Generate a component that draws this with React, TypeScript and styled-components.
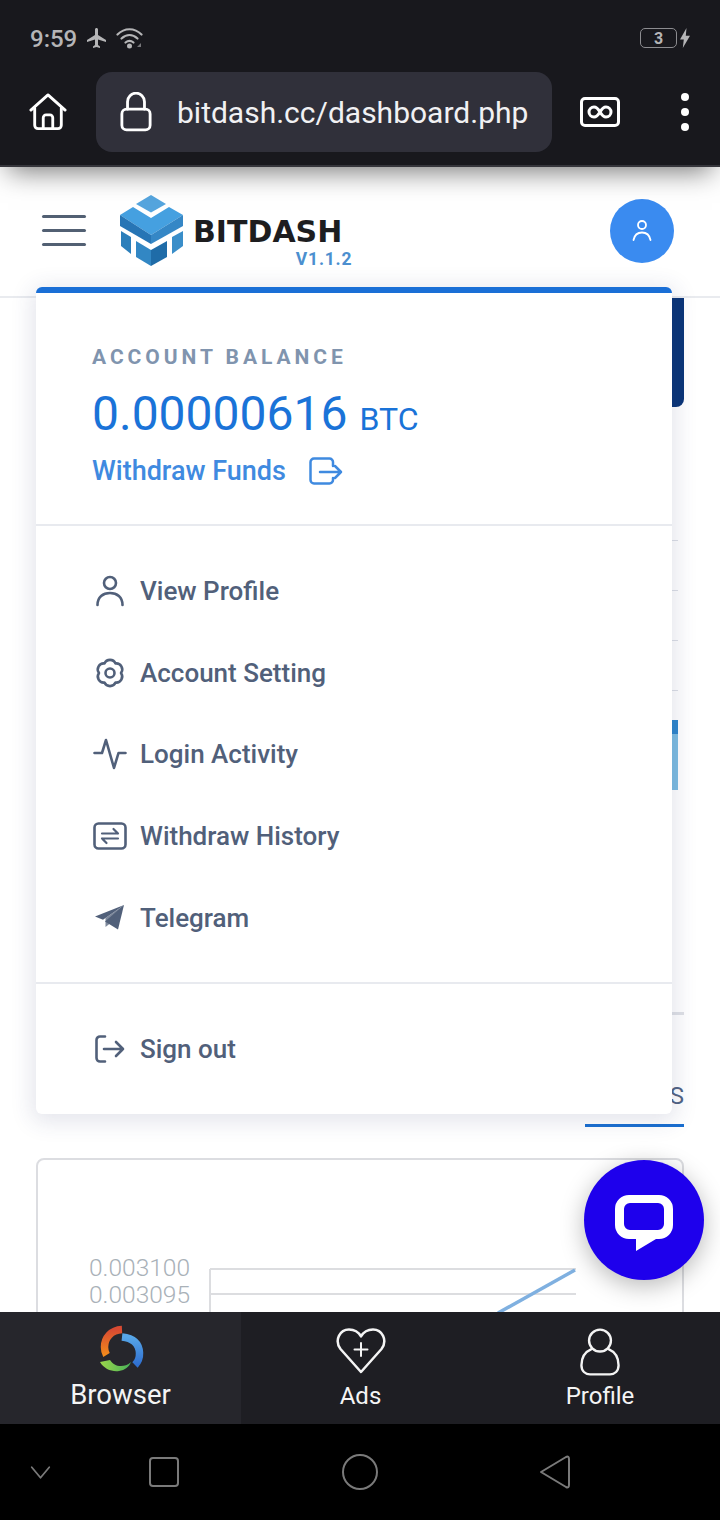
import React from 'react';
import styled, { createGlobalStyle } from 'styled-components';

const GlobalStyle = createGlobalStyle`
  html, body {
    margin: 0;
    padding: 0;
    background: #000;
  }
  * {
    box-sizing: border-box;
  }
`;

const Phone = styled.div`
  width: 720px;
  height: 1520px;
  display: flex;
  flex-direction: column;
  overflow: hidden;
  font-family: Roboto, 'Liberation Sans', sans-serif;
  background: #fff;
`;

const BrowserChrome = styled.header`
  position: relative;
  z-index: 3;
  flex: none;
  height: 167px;
  background: #18181d;
  border-bottom: 2px solid #35353b;
  box-shadow: 0 12px 26px -8px rgba(0, 0, 0, 0.55);
`;
const StatusBar = styled.div`
  height: 72px;
  padding: 26px 30px 0 30px;
  display: flex;
  align-items: flex-start;
  color: #b5b5b7;
`;
const Clock = styled.span`
  font-size: 24px;
  font-weight: 500;
  line-height: 26px;
  margin-right: 8px;
`;
const StatusSpacer = styled.div`
  flex: 1;
`;
const Battery = styled.div`
  width: 37px;
  height: 20px;
  margin-top: 2px;
  border: 1.5px solid #8c8c90;
  border-radius: 5px;
  display: flex;
  align-items: center;
  justify-content: center;
  font-size: 16px;
  font-weight: 700;
  color: #b5b5b7;
`;
const Toolbar = styled.div`
  display: flex;
  align-items: center;
  height: 80px;
  padding-left: 29px;
`;
const AddressBar = styled.div`
  width: 456px;
  height: 80px;
  margin-left: 29px;
  padding-left: 24px;
  display: flex;
  align-items: center;
  gap: 25px;
  background: #30303a;
  border-radius: 16px;
`;
const Url = styled.span`
  font-size: 30px;
  color: #f1f1f3;
  white-space: nowrap;
`;
const TabCounter = styled.div`
  width: 40px;
  height: 30px;
  margin-left: 28px;
  border: 3px solid #fff;
  border-radius: 5px;
  display: flex;
  align-items: center;
  justify-content: center;
`;
const MenuDots = styled.div`
  margin-left: 61px;
  display: flex;
  flex-direction: column;
  gap: 7px;
`;
const Dot = styled.span`
  width: 8px;
  height: 8px;
  border-radius: 50%;
  background: #fff;
`;

const WebArea = styled.main`
  position: relative;
  flex: none;
  height: 1145px;
  overflow: hidden;
  background: #fff;
`;
const SiteHeader = styled.div`
  height: 131px;
  padding: 0 46px 2px 42px;
  display: flex;
  align-items: center;
  background: #fff;
  border-bottom: 2px solid #e9ebef;
`;
const Hamburger = styled.div`
  width: 44px;
  display: flex;
  flex-direction: column;
  gap: 11px;
  margin-right: 33px;
`;
const HamburgerLine = styled.span`
  height: 3px;
  border-radius: 2px;
  background: #526073;
`;
const Brand = styled.div`
  display: flex;
  align-items: flex-start;
  gap: 6px;
`;
const BrandText = styled.div`
  display: flex;
  flex-direction: column;
  align-items: flex-end;
  padding-top: 23px;
`;
const BrandName = styled.span`
  font-family: 'DejaVu Sans', Inter, sans-serif;
  font-size: 30px;
  font-weight: 700;
  line-height: 30px;
  color: #1d1d1f;
`;
const BrandVersion = styled.span`
  font-size: 17.5px;
  font-weight: 700;
  line-height: 18px;
  letter-spacing: 0.8px;
  color: #4b8fcf;
  margin-right: -10px;
  margin-top: 3px;
`;
const Avatar = styled.div`
  width: 64px;
  height: 64px;
  margin-left: auto;
  border-radius: 50%;
  background: #3a8bf0;
  display: flex;
  align-items: center;
  justify-content: center;
`;

const PageBehind = styled.div`
  padding: 0 36px;
`;
const HeroCard = styled.div`
  height: 109px;
  background: #0a3578;
  border-radius: 0 0 8px 8px;
`;
const PeekRows = styled.div`
  margin-top: 84px;
  padding-right: 6px;
`;
const PeekRow = styled.div`
  height: 50px;
  border-bottom: 1px solid #dcdfe6;
`;
const PeekBar = styled.div`
  height: 70px;
  margin: 29px 6px 0 0;
  background: linear-gradient(#2f86cc 0 14px, #7dbde2 14px);
`;
const PeekRule = styled.div`
  height: 3px;
  margin-top: 222px;
  background: #dfe1e6;
`;
const TabsRow = styled.div`
  margin-top: 64px;
  display: flex;
  justify-content: flex-end;
`;
const TabLabel = styled.div`
  width: 99px;
  height: 48px;
  text-align: right;
  font-size: 24px;
  line-height: 34px;
  color: #526484;
  border-bottom: 3px solid #1a6fd0;
`;
const ChartCard = styled.div`
  margin-top: 31px;
  height: 300px;
  border: 2px solid #dcdde1;
  border-radius: 8px;
  overflow: hidden;
`;

const Dropdown = styled.section`
  position: absolute;
  z-index: 1;
  left: 36px;
  top: 120px;
  width: 636px;
  background: #fff;
  border-top: 6px solid #1a6fd6;
  border-radius: 6px;
  box-shadow: 0 4px 22px 4px rgba(43, 55, 110, 0.13);
`;
const BalancePanel = styled.div`
  height: 233px;
  padding: 53px 56px 0;
  border-bottom: 2px solid #e8eaef;
`;
const BalanceLabel = styled.div`
  font-size: 21px;
  font-weight: 700;
  line-height: 22px;
  letter-spacing: 3.95px;
  color: #8094ae;
`;
const BalanceAmount = styled.div`
  display: flex;
  align-items: baseline;
  gap: 12px;
  margin-top: 18px;
  color: #1a73d8;
  font-size: 48px;
  line-height: 56px;
`;
const BalanceUnit = styled.span`
  font-size: 32px;
`;
const WithdrawLink = styled.a`
  display: flex;
  align-items: center;
  gap: 23px;
  margin-top: 7px;
  font-size: 27px;
  font-weight: 500;
  line-height: 34px;
  color: #3f8ae0;
`;
const MenuSection = styled.ul<{ $divided?: boolean }>`
  list-style: none;
  margin: 0;
  padding: 24px 0 24px 56px;
  border-bottom: ${(p) => (p.$divided ? '2px solid #e8eaef' : 'none')};
`;
const MenuItem = styled.li`
  display: flex;
  align-items: center;
  height: 81.7px;
  gap: 12px;
  font-size: 26px;
  font-weight: 500;
  color: #51607a;
`;
const IconSlot = styled.span`
  width: 36px;
  flex: none;
  display: flex;
  justify-content: center;
`;

const ChatButton = styled.button`
  position: absolute;
  z-index: 2;
  right: 16px;
  bottom: 32px;
  width: 120px;
  height: 120px;
  border: 0;
  padding: 6px 0 0;
  border-radius: 50%;
  background: #1e00ec;
  box-shadow: 0 6px 24px rgba(0, 0, 0, 0.28);
  display: flex;
  align-items: center;
  justify-content: center;
`;

const TabBar = styled.nav`
  flex: none;
  height: 112px;
  display: grid;
  grid-template-columns: 241px 1fr 240px;
  background: #1e1e23;
`;
const TabBarItem = styled.div<{ $active?: boolean }>`
  display: flex;
  flex-direction: column;
  align-items: center;
  padding-top: ${(p) => (p.$active ? '13px' : '16px')};
  gap: ${(p) => (p.$active ? '3px' : '1px')};
  background: ${(p) => (p.$active ? '#26262c' : 'transparent')};
  color: #f4f4f4;
  font-size: ${(p) => (p.$active ? '27.5px' : '24px')};
  line-height: 34px;
`;
const TabIcon = styled.div`
  height: 50px;
`;
const SystemNav = styled.div`
  flex: none;
  height: 96px;
  background: #000;
  display: flex;
  align-items: center;
`;
const SystemSlot = styled.div<{ $width: number }>`
  display: flex;
  justify-content: center;
  width: ${(p) => p.$width}px;
`;

const Stroke = { fill: 'none', strokeLinecap: 'round', strokeLinejoin: 'round' } as const;

const HomeIcon = () => (
  <svg width="38" height="38" viewBox="0 0 40 40" {...Stroke} stroke="#fff" strokeWidth="3">
    <path d="M2 18 20 2l18 16" />
    <path d="M6 16v18a3.500 3.500 0 0 0 3.500 3.500h21A3.500 3.500 0 0 0 34 34V16" />
    <path d="M15 37V26a3 3 0 0 1 3-3h4a3 3 0 0 1 3 3v11" />
  </svg>
);
const LockIcon = () => (
  <svg width="32" height="40" viewBox="0 0 34 42" {...Stroke} stroke="#fff" strokeWidth="3">
    <rect x="2" y="18" width="30" height="22" rx="5" />
    <path d="M8 18V10a9 9 0 0 1 18 0v8" />
  </svg>
);
const InfinityIcon = () => (
  <svg width="26" height="14" viewBox="0 0 26 14" {...Stroke} stroke="#fff" strokeWidth="3">
    <path d="M13 7C11 3.500 9.500 2 7 2a5 5 0 0 0 0 10c2.500 0 4-1.500 6-5s3.500-5 6-5a5 5 0 0 1 0 10c-2.500 0-4-1.500-6-5z" />
  </svg>
);
const PlaneIcon = () => (
  <svg width="24" height="24" viewBox="0 0 24 24" fill="#b5b5b7">
    <path d="M21 16v-2l-8-5V3.500c0-.83-.67-1.500-1.500-1.500S10 2.670 10 3.500V9l-8 5v2l8-2.500V19l-2 1.500V22l3.500-1 3.500 1v-1.500L13 19v-5.500l8 2.500z" />
  </svg>
);
const WifiIcon = () => (
  <svg width="28" height="22" viewBox="0 0 28 22" {...Stroke} stroke="#b5b5b7" strokeWidth="2.200" style={{ margin: '1px 0 0 7px' }}>
    <path d="M1.500 7.500C8.500 .5 18.500 .5 25.500 7.500" />
    <path d="M5.500 11.500c5-4.500 11-4.500 16 0" />
    <path d="M9.500 15.500c2.800-2.400 5.200-2.400 8 0" />
    <circle cx="13.500" cy="19" r="1.400" fill="#b5b5b7" />
    <path d="M21 20l4-4v4z" fill="#77777b" stroke="none" />
  </svg>
);
const BoltIcon = () => (
  <svg width="10" height="20" viewBox="0 0 10 20" fill="#b5b5b7" style={{ marginTop: 2, marginLeft: 3 }}>
    <path d="M6.500 0 0 11.500h3.800L2.800 20 10 7.800H5.800z" />
  </svg>
);

const LogoMark = () => (
  <svg width="68" height="74" viewBox="18 11 68 74">
    <polygon points="50,12 65,21 50,29.500 35,21" fill="#55a5de" />
    <polygon points="19,32 32,24 50,35 68,24 82,32 50,52" fill="#45a0e0" />
    <polygon points="19,32 50,52 50,61 19,43" fill="#2775b5" />
    <polygon points="82,32 50,52 50,61 82,43" fill="#3587c6" />
    <polygon points="20,48 30,54 30,71 20,63" fill="#2c7fbb" />
    <polygon points="35,58 50,67 50,83 35,74" fill="#3287c4" />
    <polygon points="50,67 66,58 66,74 50,83" fill="#1f6ca8" />
    <polygon points="71,54 82,48 82,63 71,71" fill="#3a8ec9" />
  </svg>
);
const AvatarIcon = () => (
  <svg width="20" height="24" viewBox="0 0 20 24" {...Stroke} stroke="#fff" strokeWidth="1.800">
    <circle cx="10" cy="6" r="4" />
    <path d="M1.500 21c1-5 4.500-7.500 8.500-7.500s7.500 2.500 8.500 7.500" />
  </svg>
);
const ExitBoxIcon = () => (
  <svg width="34" height="28" viewBox="0 0 34 28" {...Stroke} stroke="#3f8ae0" strokeWidth="2.500">
    <path d="M24 9V5a3.500 3.500 0 0 0-3.500-3.500H5A3.500 3.500 0 0 0 1.500 5v18A3.500 3.500 0 0 0 5 26.500h15.500A3.500 3.500 0 0 0 24 23v-2" />
    <path d="M11 15h21M26 9l6 6-6 6" />
  </svg>
);

const menuIcon = { ...Stroke, stroke: '#51607a', strokeWidth: 2.600 };

const UserIcon = () => (
  <svg width="28" height="32" viewBox="0 0 28 32" {...menuIcon}>
    <circle cx="14" cy="8" r="6" />
    <path d="M1.500 30c0-8 5.500-12 12.500-12s12.500 4 12.500 12" />
  </svg>
);

// six rounded lobes round a hub, valleys every 60deg
const gearPath = (() => {
  const pts = [0, 1, 2, 3, 4, 5].map((i) => {
    const a = (i * Math.PI) / 3;
    return [16 + 11 * Math.cos(a), 16 + 11 * Math.sin(a)];
  });
  const arcs = pts.slice(1).concat([pts[0]]);
  return (
    `M${pts[0][0]} ${pts[0][1]}` +
    arcs.map(([x, y]) => `A6 6 0 0 1 ${x} ${y}`).join('') +
    'Z'
  );
})();
const GearIcon = () => (
  <svg width="32" height="32" viewBox="0 0 32 32" {...menuIcon}>
    <path d={gearPath} />
    <circle cx="16" cy="16" r="4.500" />
  </svg>
);
const ActivityIcon = () => (
  <svg width="34" height="32" viewBox="0 0 34 32" {...menuIcon}>
    <path d="M1.500 15h7.500L13 2l8 28 4.500-15h7" />
  </svg>
);
const TransferIcon = () => (
  <svg width="34" height="28" viewBox="0 0 34 28" {...menuIcon}>
    <rect x="1.500" y="1.500" width="31" height="25" rx="4" />
    <path d="M9 16.500h16M9 16.500l4.500 4.500M25 11.500H9M25 11.500l-4.500-4.500" strokeWidth="2.200" />
  </svg>
);
const PlaneSendIcon = () => (
  <svg width="30" height="26" viewBox="0 0 30 26" fill="#51607a">
    <path d="M29 0 0 11.500l8 3.200z" />
    <path d="M29 0 10 16.500 23 24.500z" />
    <path d="M29 0 10.500 13l0 9 4.500-3.500z" opacity="0.75" />
  </svg>
);
const SignOutIcon = () => (
  <svg width="30" height="28" viewBox="0 0 30 28" {...menuIcon}>
    <path d="M10 1.500H5A3.500 3.500 0 0 0 1.500 5v18A3.500 3.500 0 0 0 5 26.500h5" />
    <path d="M9 14h19M21 7l7 7-7 7" />
  </svg>
);

const ChatIcon = () => (
  <svg width="58" height="56" viewBox="0 0 58 56">
    <path
      fillRule="evenodd"
      fill="#fff"
      d="M14 0h30a14 14 0 0 1 14 14v16a14 14 0 0 1-14 14h-3L21 56V44h-7A14 14 0 0 1 0 30V14A14 14 0 0 1 14 0zM15 8a6 6 0 0 0-6 6v15a6 6 0 0 0 6 6h28a6 6 0 0 0 6-6V14a6 6 0 0 0-6-6z"
    />
  </svg>
);

const ChartPlot = () => (
  <svg width="642" height="152" viewBox="0 0 642 152">
    <g stroke="#dcdde0" strokeWidth="2" fill="none">
      <path d="M172 109h366M172 134h366M172 109v43" />
    </g>
    <path d="M537 110 460 153" stroke="#7fb0e0" strokeWidth="3.500" fill="none" />
    <g fill="#a9b1b8" fontFamily="Roboto, sans-serif" fontWeight="300" fontSize="24.500" textAnchor="end">
      <text x="152" y="116">0.003100</text>
      <text x="152" y="143">0.003095</text>
    </g>
  </svg>
);

const SwirlIcon = () => (
  <svg width="50" height="50" viewBox="0 0 50 50" fill="none" strokeWidth="7.500">
    <defs>
      <linearGradient id="swirlRed" x1="0" y1="0" x2="0" y2="1">
        <stop offset="0" stopColor="#d84a32" />
        <stop offset="1" stopColor="#f28a1c" />
      </linearGradient>
      <linearGradient id="swirlBlue" x1="0" y1="0" x2="0" y2="1">
        <stop offset="0" stopColor="#57a6e8" />
        <stop offset="1" stopColor="#2f6fd0" />
      </linearGradient>
      <linearGradient id="swirlGreen" x1="0" y1="0" x2="1" y2="0">
        <stop offset="0" stopColor="#9cd64a" />
        <stop offset="1" stopColor="#47b25a" />
      </linearGradient>
    </defs>
    <path d="M26 4.500C15 5 8.500 13 8.500 22c0 3 .5 5.500 2 8" stroke="url(#swirlRed)" />
    <path d="M26 12c9 1 17 5 17.500 16 .2 5-2 9.500-4.500 12" stroke="url(#swirlBlue)" />
    <path d="M4 37c4 7 12 10 19 9 6-1 10-4 12-9-3 3-7 4-10 4-5 0-8-2-11-6z" fill="url(#swirlGreen)" strokeWidth="0" />
  </svg>
);
const HeartPlusIcon = () => (
  <svg width="50" height="46" viewBox="0 0 50 46" {...Stroke} stroke="#f4f4f4" strokeWidth="2.500">
    <path d="M25 44 4.500 21C-2 12 4 1.500 13 1.500c5 0 9.500 2.500 12 7 2.500-4.500 7-7 12-7 9 0 15 10.500 8.500 19.500z" />
    <path d="M25 15v13M18.500 21.500h13" strokeWidth="2" />
  </svg>
);
const PersonIcon = () => (
  <svg width="40" height="48" viewBox="0 0 42 50" {...Stroke} stroke="#f4f4f4" strokeWidth="2.500">
    <ellipse cx="21" cy="13" rx="11.500" ry="11.500" />
    <path d="M12 22C5 25 1.500 31 1.500 39c0 6 4 9.500 9 9.500h21c5 0 9-3.500 9-9.500 0-8-3.500-14-10.500-17" />
  </svg>
);

const navStroke = { ...Stroke, stroke: '#7a7a7a', strokeWidth: 2 };

const NavChevron = () => (
  <svg width="21" height="15" viewBox="0 0 24 16" {...navStroke}>
    <path d="M2 2l10 12L22 2" />
  </svg>
);
const NavSquare = () => (
  <svg width="30" height="30" viewBox="0 0 30 30" {...navStroke}>
    <rect x="1" y="1" width="28" height="28" rx="3" />
  </svg>
);
const NavCircle = () => (
  <svg width="36" height="36" viewBox="0 0 36 36" {...navStroke}>
    <circle cx="18" cy="18" r="17" />
  </svg>
);
const NavBack = () => (
  <svg width="32" height="34" viewBox="0 0 32 34" {...navStroke}>
    <path d="M2 17 27 2c2-1 3 0 3 2v26c0 2-1 3-3 2z" />
  </svg>
);

const menuItems = [
  { label: 'View Profile', icon: <UserIcon /> },
  { label: 'Account Setting', icon: <GearIcon /> },
  { label: 'Login Activity', icon: <ActivityIcon /> },
  { label: 'Withdraw History', icon: <TransferIcon /> },
  { label: 'Telegram', icon: <PlaneSendIcon /> },
];

export default function App() {
  return (
    <Phone>
      <GlobalStyle />
      <BrowserChrome>
        <StatusBar>
          <Clock>9:59</Clock>
          <PlaneIcon />
          <WifiIcon />
          <StatusSpacer />
          <Battery>3</Battery>
          <BoltIcon />
        </StatusBar>
        <Toolbar>
          <HomeIcon />
          <AddressBar>
            <LockIcon />
            <Url>bitdash.cc/dashboard.php</Url>
          </AddressBar>
          <TabCounter>
            <InfinityIcon />
          </TabCounter>
          <MenuDots>
            <Dot />
            <Dot />
            <Dot />
          </MenuDots>
        </Toolbar>
      </BrowserChrome>

      <WebArea>
        <SiteHeader>
          <Hamburger>
            <HamburgerLine />
            <HamburgerLine />
            <HamburgerLine />
          </Hamburger>
          <Brand>
            <LogoMark />
            <BrandText>
              <BrandName>BITDASH</BrandName>
              <BrandVersion>V1.1.2</BrandVersion>
            </BrandText>
          </Brand>
          <Avatar>
            <AvatarIcon />
          </Avatar>
        </SiteHeader>

        <PageBehind>
          <HeroCard />
          <PeekRows>
            <PeekRow />
            <PeekRow />
            <PeekRow />
            <PeekRow />
          </PeekRows>
          <PeekBar />
          <PeekRule />
          <TabsRow>
            <TabLabel>S</TabLabel>
          </TabsRow>
          <ChartCard>
            <ChartPlot />
          </ChartCard>
        </PageBehind>

        <Dropdown>
          <BalancePanel>
            <BalanceLabel>ACCOUNT BALANCE</BalanceLabel>
            <BalanceAmount>
              0.00000616 <BalanceUnit>BTC</BalanceUnit>
            </BalanceAmount>
            <WithdrawLink>
              Withdraw Funds
              <ExitBoxIcon />
            </WithdrawLink>
          </BalancePanel>
          <MenuSection $divided>
            {menuItems.map((item) => (
              <MenuItem key={item.label}>
                <IconSlot>{item.icon}</IconSlot>
                {item.label}
              </MenuItem>
            ))}
          </MenuSection>
          <MenuSection>
            <MenuItem>
              <IconSlot>
                <SignOutIcon />
              </IconSlot>
              Sign out
            </MenuItem>
          </MenuSection>
        </Dropdown>

        <ChatButton>
          <ChatIcon />
        </ChatButton>
      </WebArea>

      <TabBar>
        <TabBarItem $active>
          <TabIcon>
            <SwirlIcon />
          </TabIcon>
          Browser
        </TabBarItem>
        <TabBarItem>
          <TabIcon>
            <HeartPlusIcon />
          </TabIcon>
          Ads
        </TabBarItem>
        <TabBarItem>
          <TabIcon>
            <PersonIcon />
          </TabIcon>
          Profile
        </TabBarItem>
      </TabBar>

      <SystemNav>
        <SystemSlot $width={80}>
          <NavChevron />
        </SystemSlot>
        <SystemSlot $width={167}>
          <NavSquare />
        </SystemSlot>
        <SystemSlot $width={226}>
          <NavCircle />
        </SystemSlot>
        <SystemSlot $width={164}>
          <NavBack />
        </SystemSlot>
      </SystemNav>
    </Phone>
  );
}
